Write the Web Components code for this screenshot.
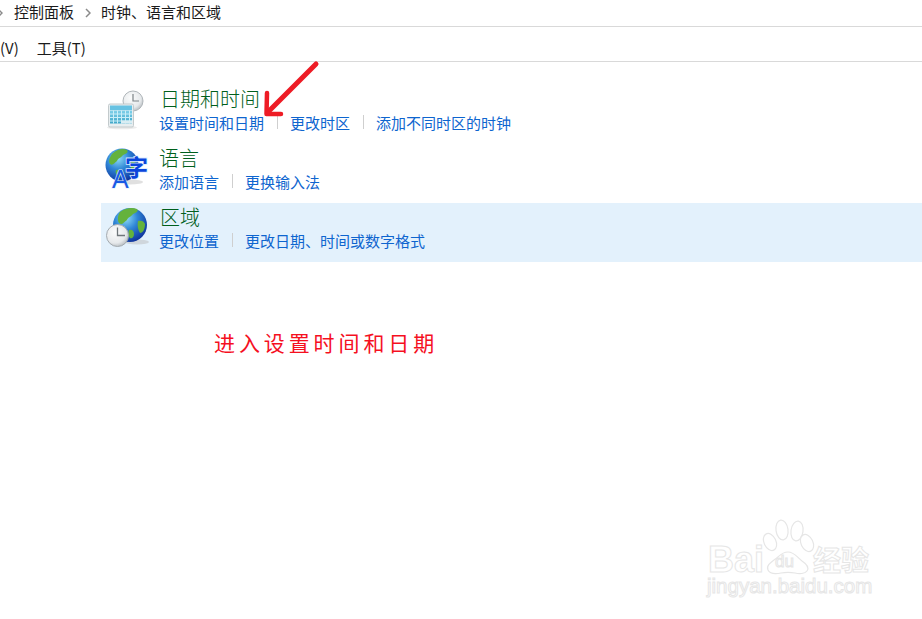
<!DOCTYPE html>
<html lang="zh">
<head>
<meta charset="utf-8">
<title>时钟、语言和区域</title>
<style>
  html, body { margin:0; background:#fff; }
  body { width:922px; height:619px; overflow:hidden; position:relative; font-family:"Noto Sans CJK SC","Liberation Sans",sans-serif; }
</style>
</head>
<body>
<svg width="0" height="0" style="position:absolute">
  <defs>
    <radialGradient id="globeFill" cx="38%" cy="30%" r="75%">
      <stop offset="0" stop-color="#8fdcf5"/><stop offset=".45" stop-color="#2f86d6"/><stop offset="1" stop-color="#0d2f9a"/>
    </radialGradient>
    <radialGradient id="clockFill" cx="40%" cy="35%" r="70%">
      <stop offset="0" stop-color="#fbfcfc"/><stop offset=".7" stop-color="#e6e9eb"/><stop offset="1" stop-color="#b4babe"/>
    </radialGradient>
    <linearGradient id="calFill" x1="0" y1="0" x2="0" y2="1">
      <stop offset="0" stop-color="#7fd0ea"/><stop offset="1" stop-color="#3fa6c8"/>
    </linearGradient>
  </defs>
</svg>

<app-page>
  <crumb-bar></crumb-bar>
  <menu-bar></menu-bar>
  <cp-category heading="日期和时间" links="设置时间和日期|更改时区|添加不同时区的时钟" head-x="1">
    <svg slot="icon" width="44" height="44" viewBox="0 0 44 44" style="margin:3px 0 0 4px">
      <ellipse cx="17" cy="39.500" rx="15" ry="1.800" fill="#ddd" opacity=".6"/>
      <circle cx="28" cy="13" r="10" fill="url(#clockFill)" stroke="#b0b6ba"/>
      <path d="M28 6V13H34" fill="none" stroke="#7c8387" stroke-width="1.200"/>
      <rect x="3.500" y="16" width="25" height="23" rx="1.500" fill="#e8eef0" stroke="#c3cacc"/>
      <rect x="5" y="17.500" width="22" height="4.500" fill="#67c2e2"/>
      <rect x="5" y="22.500" width="22" height="13" fill="url(#calFill)"/>
      <path d="M8.500 22.500v13M12.500 22.500v13M16.500 22.500v13M20.500 22.500v13M24.500 22.500v13M5 26h22M5 29.500h22M5 33h22" stroke="#c9eef8" stroke-width="1"/>
      <rect x="16" y="32.500" width="11" height="3" fill="#d9edf3"/>
    </svg>
  </cp-category>
  <cp-category heading="语言" links="添加语言|更换输入法" head-x="0">
    <svg slot="icon" width="46" height="52" viewBox="0 0 46 52" style="margin:1px 0 0 3px">
      <ellipse cx="26" cy="37" rx="13" ry="2.500" fill="#ccc" opacity=".6"/>
      <circle cx="18" cy="20" r="16.500" fill="url(#globeFill)"/>
      <path d="M8 9c5-5 11-6 15-4 2 2-1 4-4 5-2 3-5 3-6 6-3 2-4 5-7 3-2-3 0-7 2-10zM27 17c2-1 5 0 6 3 0 4-2 8-4 8-2-3-3-7-2-11zM12 25c3-1 5 1 5 4 0 2-2 4-3 3-2-2-3-5-2-7z" fill="#64b23c"/>
      <text x="21" y="31" font-family="'Noto Sans CJK SC',sans-serif" font-size="23" font-weight="700" fill="#0b46dc" stroke="#dcecff" stroke-width="1.600" paint-order="stroke">字</text>
      <text x="8" y="43" font-family="'Liberation Sans',sans-serif" font-size="25" fill="#1a5ae4" stroke="#dcecff" stroke-width="1.200" paint-order="stroke">A</text>
    </svg>
  </cp-category>
  <cp-category heading="区域" links="更改位置|更改日期、时间或数字格式" head-x="1" highlight>
    <svg slot="icon" width="46" height="46" viewBox="0 0 46 46" style="margin:3px 0 0 4px">
      <ellipse cx="32" cy="36" rx="12" ry="2.500" fill="#bbb" opacity=".5"/>
      <circle cx="25" cy="19" r="17" fill="url(#globeFill)"/>
      <path d="M15 6c5-4 12-5 17-3 2 2-1 4-4 5-2 3-5 3-6 6-3 2-5 6-8 3-2-3-1-8 1-11zM33 15c3-1 6 0 7 3 0 5-2 9-5 9-2-3-3-8-2-12zM24 24c3-1 5 1 5 4 0 3-2 5-4 4-2-2-2-6-1-8z" fill="#64b23c"/>
      <circle cx="12.500" cy="29.500" r="11" fill="url(#clockFill)" stroke="#a4abb0"/>
      <path d="M12.500 21.500V29.500H20" fill="none" stroke="#6f767a" stroke-width="1.300"/>
    </svg>
  </cp-category>
  <note-line>进入设置时间和日期</note-line>
  <pointer-arrow></pointer-arrow>
  <baidu-mark></baidu-mark>
</app-page>

<script>
  const define = (name, css, html) => {
    customElements.define(name, class extends HTMLElement {
      connectedCallback() {
        if (this.shadowRoot) return;
        this.attachShadow({ mode: "open" });
        this.shadowRoot.innerHTML = `<style>${css}</style>${typeof html === "function" ? html(this) : html}`;
      }
    });
  };

  define("app-page",
    `:host { display:block; width:922px; height:619px; color:#1a1a1a; overflow:hidden; }`,
    `<slot></slot>`);

  define("crumb-bar",
    `:host { display:flex; align-items:center; height:26px; border-bottom:1px solid #d9d9d9; font-size:15px; color:#1a1a1a; overflow:hidden; }
     span { line-height:24px; margin-top:-2px; }
     svg { flex:none; display:block; }
     .first { margin-left:-3px; margin-right:11px; }
     .mid { margin:0 10.500px; }`,
    `<svg class="first" width="6" height="10" viewBox="0 0 6 10"><path d="M1 1l4 4-4 4" fill="none" stroke="#8a8a8a" stroke-width="1.500"/></svg>
     <span>控制面板</span>
     <svg class="mid" width="6" height="10" viewBox="0 0 6 10"><path d="M1 1l4 4-4 4" fill="none" stroke="#8a8a8a" stroke-width="1.500"/></svg>
     <span>时钟、语言和区域</span>`);

  define("menu-bar",
    `:host { display:flex; align-items:center; gap:18px; height:34px; border-bottom:1px solid #d9d9d9; font-size:15px; color:#1a1a1a; margin-bottom:23px; }
     span { margin-top:7px; line-height:20px; }`,
    `<span>(V)</span><span>工具(T)</span>`);

  define("cp-category",
    `:host { display:grid; grid-template-columns:58px 1fr; height:59px; margin-left:101px; box-sizing:border-box; }
     :host([highlight]) { background:#e3f1fc; }
     .icon { display:block; height:59px; overflow:hidden; }
     .text { display:flex; flex-direction:column; padding-top:1px; }
     h2 { margin:0; font-size:20px; line-height:25px; font-weight:300; color:#005f1c; padding-left:var(--head-x); }
     .links { display:flex; align-items:center; height:22px; font-size:15px; color:#0e65cf; white-space:nowrap; }
     a { color:inherit; text-decoration:none; }
     i { width:1px; height:14px; background:#cfcfcf; margin:0 12.500px; }`,
    (el) => {
      const links = el.getAttribute("links").split("|")
        .map((text) => `<a href="#">${text}</a>`).join("<i></i>");
      return `<div class="icon"><slot name="icon"></slot></div>
        <div class="text" style="--head-x:${el.getAttribute("head-x")}px">
          <h2>${el.getAttribute("heading")}</h2><div class="links">${links}</div>
        </div>`;
    });

  define("note-line",
    `:host { display:block; margin:67px 0 0 214px; font-family:"Liberation Serif","Noto Sans CJK SC",serif; font-size:21px; line-height:30px; letter-spacing:3.900px; color:#f5101f; }`,
    `<slot></slot>`);

  define("pointer-arrow",
    `:host { position:absolute; left:255px; top:55px; display:block; }
     svg { display:block; }`,
    `<svg width="70" height="65" viewBox="0 0 70 65">
       <path d="M61 9L13 57" fill="none" stroke="#ee1c25" stroke-width="5" stroke-linecap="round"/>
       <path d="M12 38L11.500 59L26 59" fill="none" stroke="#ee1c25" stroke-width="4.500" stroke-linecap="round" stroke-linejoin="round"/>
     </svg>`);

  define("baidu-mark",
    `:host { position:absolute; left:700px; top:518px; display:block; width:190px; height:85px; }
     svg { display:block; }
     text { fill:#fff; stroke:#e6e6e6; stroke-width:1; }`,
    `<svg width="190" height="85" viewBox="0 0 190 85">
       <text x="8" y="54" font-family="'Liberation Sans',sans-serif" font-size="36" font-weight="700">Bai</text>
       <g fill="#fff" stroke="#e6e6e6" stroke-width="1.200">
         <ellipse cx="70" cy="24" rx="6" ry="9" transform="rotate(-25 70 24)"/>
         <ellipse cx="82" cy="12" rx="6" ry="10" transform="rotate(-8 82 12)"/>
         <ellipse cx="97" cy="13" rx="6" ry="10" transform="rotate(8 97 13)"/>
         <ellipse cx="107" cy="25" rx="6" ry="9" transform="rotate(-25 107 25)"/>
         <path d="M88 34c6 0 9 5 14 9 6 4 7 7 5 10-2 3-8 3-12 2-5-1-9-1-14 0-5 1-11 1-13-3-2-4 2-7 6-10 5-3 7-8 14-8z"/>
       </g>
       <text x="75" y="49" font-family="'Liberation Sans',sans-serif" font-size="17">du</text>
       <text x="113" y="53" font-family="'Noto Sans CJK SC',sans-serif" font-size="28" font-weight="700">经验</text>
       <text x="7" y="75" font-family="'Liberation Sans',sans-serif" font-size="20.500">jingyan.baidu.com</text>
     </svg>`);
</script>
</body>
</html>
